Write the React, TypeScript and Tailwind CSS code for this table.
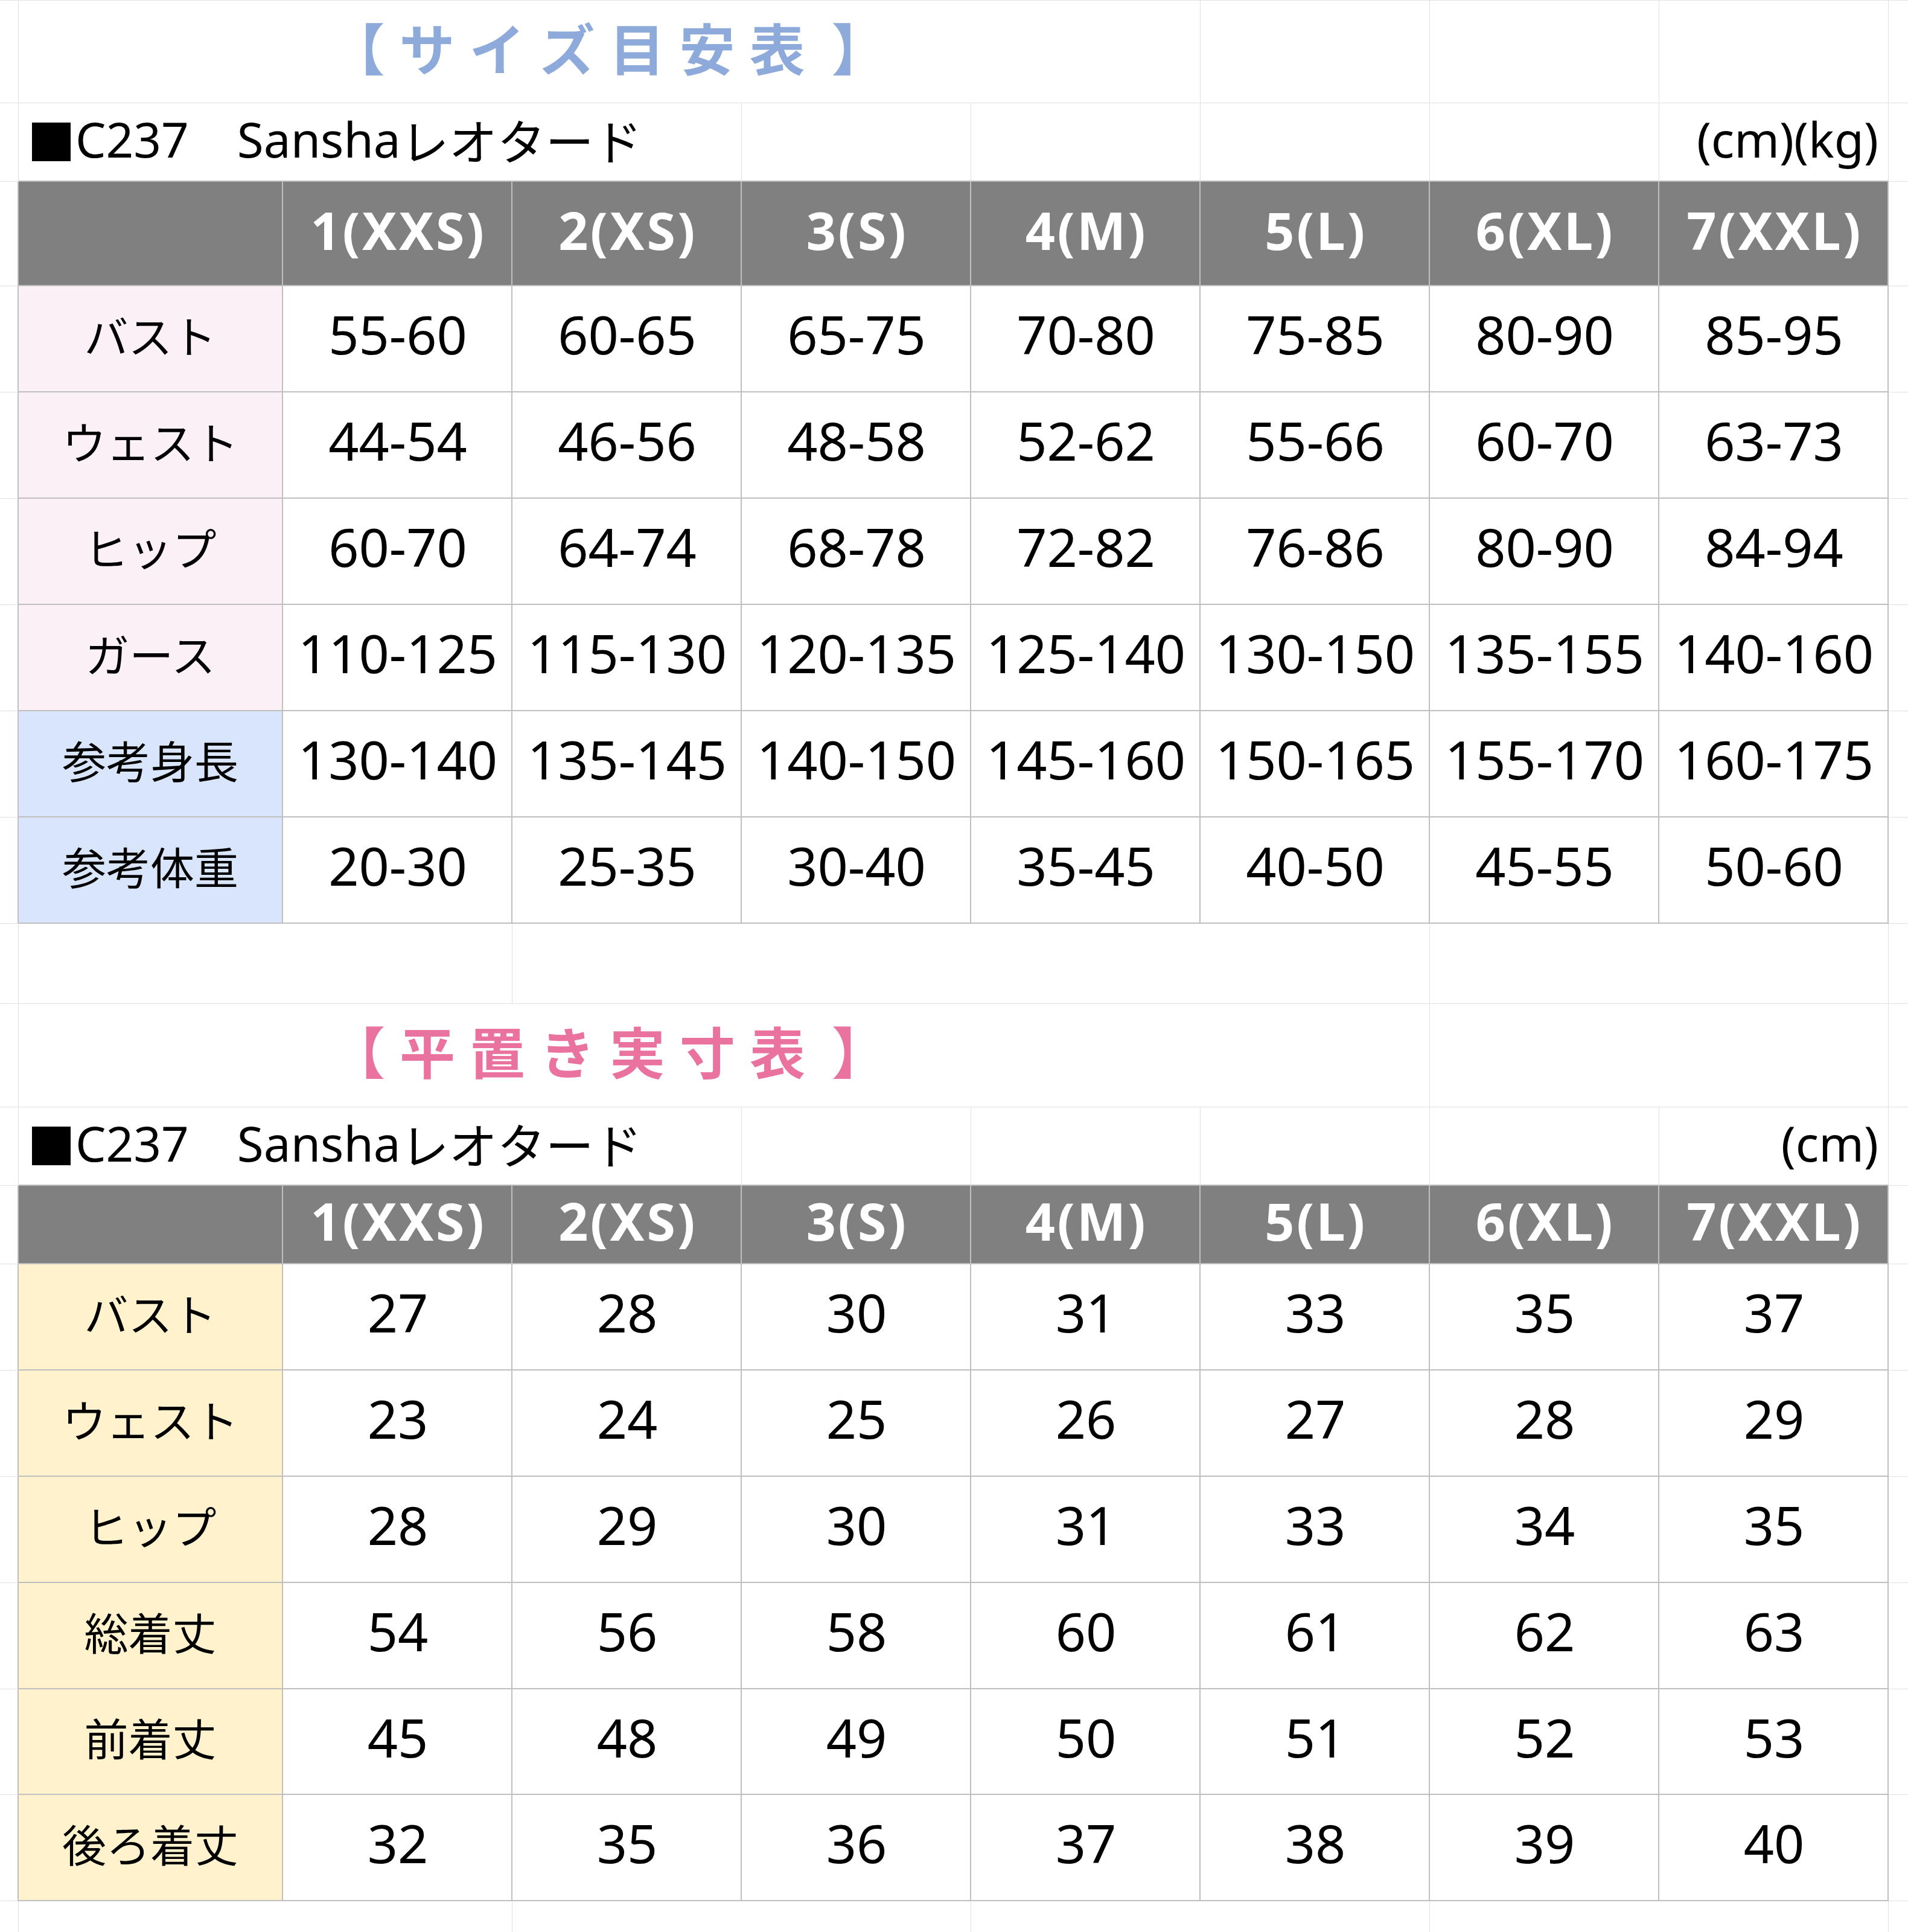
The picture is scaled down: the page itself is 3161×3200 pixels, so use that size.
import React from "react";

const sizes = ["1(XXS)", "2(XS)", "3(S)", "4(M)", "5(L)", "6(XL)", "7(XXL)"];

const table1: { label: string; bg: string; vals: string[] }[] = [
  { label: "バスト", bg: "bg-[#fbf0f6]", vals: ["55-60", "60-65", "65-75", "70-80", "75-85", "80-90", "85-95"] },
  { label: "ウェスト", bg: "bg-[#fbf0f6]", vals: ["44-54", "46-56", "48-58", "52-62", "55-66", "60-70", "63-73"] },
  { label: "ヒップ", bg: "bg-[#fbf0f6]", vals: ["60-70", "64-74", "68-78", "72-82", "76-86", "80-90", "84-94"] },
  { label: "ガース", bg: "bg-[#fbf0f6]", vals: ["110-125", "115-130", "120-135", "125-140", "130-150", "135-155", "140-160"] },
  { label: "参考身長", bg: "bg-[#d8e5fb]", vals: ["130-140", "135-145", "140-150", "145-160", "150-165", "155-170", "160-175"] },
  { label: "参考体重", bg: "bg-[#d8e5fb]", vals: ["20-30", "25-35", "30-40", "35-45", "40-50", "45-55", "50-60"] },
];

const table2: { label: string; vals: string[]; h: string }[] = [
  { label: "バスト", vals: ["27", "28", "30", "31", "33", "35", "37"], h: "h-[176px]" },
  { label: "ウェスト", vals: ["23", "24", "25", "26", "27", "28", "29"], h: "h-[176px]" },
  { label: "ヒップ", vals: ["28", "29", "30", "31", "33", "34", "35"], h: "h-[176px]" },
  { label: "総着丈", vals: ["54", "56", "58", "60", "61", "62", "63"], h: "h-[176px]" },
  { label: "前着丈", vals: ["45", "48", "49", "50", "51", "52", "53"], h: "h-[175px]" },
  { label: "後ろ着丈", vals: ["32", "35", "36", "37", "38", "39", "40"], h: "h-[176px]" },
];

const rowGrid = "grid grid-cols-[31px_438px_repeat(7,380px)_32px] w-[3161px]";
const cjk = "font-['Noto_Sans_CJK_JP',sans-serif]";
const latin = "font-['Noto_Sans','Noto_Sans_CJK_JP',sans-serif]";

function Title({ text, color }: { text: string; color: string }) {
  const chars = Array.from(text);
  return (
    <div className={`flex items-center justify-center gap-[24px] ${cjk} font-bold text-[92px] leading-none ${color} pb-[18px] pr-[4px]`}>
      {chars.map((c, i) => (
        <span key={i} className={i === chars.length - 1 ? "ml-[20px]" : ""}>
          {c}
        </span>
      ))}
    </div>
  );
}

function SubLine() {
  return (
    <div className={`${latin} text-[80px] leading-none text-black flex items-center pl-[14px] pb-[10px] h-full`}>
      <span className={cjk}>■</span>
      <span>C237</span>
      <span className={cjk}>　</span>
      <span>Sansha</span>
      <span className={cjk}>レオタード</span>
    </div>
  );
}

function HeaderRow({ h }: { h: string }) {
  return (
    <div className={`${rowGrid} ${h}`}>
      <div className="border-r-2 border-b border-r-[#bfbfbf] border-b-[#e1e1e1]" />
      <div className="bg-[#808080] border-r-2 border-b-2 border-[#bfbfbf]" />
      {sizes.map((s) => (
        <div
          key={s}
          className={`bg-[#808080] border-r-2 border-b-2 border-[#bfbfbf] flex items-center justify-center pb-[12px] pl-[4px] ${latin} font-bold text-[86px] tracking-[0.04em] leading-none text-white`}
        >
          {s}
        </div>
      ))}
      <div className="border-b border-[#e1e1e1]" />
    </div>
  );
}

function DataRow({ label, bg, vals, h }: { label: string; bg: string; vals: string[]; h: string }) {
  return (
    <div className={`${rowGrid} ${h}`}>
      <div className="border-r-2 border-b border-r-[#bfbfbf] border-b-[#e1e1e1]" />
      <div
        className={`${bg} border-r-2 border-b-2 border-[#bfbfbf] flex items-center justify-center pb-[16px] ${cjk} text-[73px] leading-none text-black`}
      >
        {label}
      </div>
      {vals.map((v, i) => (
        <div
          key={i}
          className={`bg-white border-r-2 border-b-2 border-[#bfbfbf] flex items-center justify-center pb-[16px] pl-[2px] ${latin} text-[88px] leading-none text-black`}
        >
          {v}
        </div>
      ))}
      <div className="border-b border-[#e1e1e1]" />
    </div>
  );
}

export default function App() {
  const g = "border-[#e1e1e1]";
  return (
    <div className="w-[3161px] h-[3200px] bg-white overflow-hidden flex flex-col">
      {/* Title 1 */}
      <div className={`${rowGrid} h-[171px] border-t ${g}`}>
        <div className={`border-r border-b ${g}`} />
        <div className={`col-span-5 border-r border-b ${g} flex items-center justify-center`}>
          <Title text="【サイズ目安表】" color="text-[#8eaadb]" />
        </div>
        <div className={`border-r border-b ${g}`} />
        <div className={`border-r border-b ${g}`} />
        <div className={`border-r border-b ${g}`} />
        <div className={`border-b ${g}`} />
      </div>
      {/* Sub 1 */}
      <div className={`${rowGrid} h-[130px]`}>
        <div className={`border-r border-b ${g}`} />
        <div className="col-span-3 border-r border-b-2 border-r-[#e1e1e1] border-b-[#bfbfbf]">
          <SubLine />
        </div>
        <div className="border-r border-b-2 border-r-[#e1e1e1] border-b-[#bfbfbf]" />
        <div className="border-r border-b-2 border-r-[#e1e1e1] border-b-[#bfbfbf]" />
        <div className="border-r border-b-2 border-r-[#e1e1e1] border-b-[#bfbfbf]" />
        <div className="border-r border-b-2 border-r-[#e1e1e1] border-b-[#bfbfbf]" />
        <div className={`border-r border-b-2 border-r-[#e1e1e1] border-b-[#bfbfbf] flex items-center justify-end pr-[16px] pb-[10px] ${latin} text-[80px] leading-none text-black`}>
          (cm)(kg)
        </div>
        <div className={`border-b ${g}`} />
      </div>
      <HeaderRow h="h-[173px]" />
      {table1.map((r) => (
        <DataRow key={r.label} label={r.label} bg={r.bg} vals={r.vals} h="h-[176px]" />
      ))}
      {/* Empty spacer row */}
      <div className={`${rowGrid} h-[133px]`}>
        <div className={`border-r border-b ${g}`} />
        <div className={`col-span-2 border-r border-b ${g}`} />
        <div className={`col-span-4 border-r border-b ${g}`} />
        <div className={`col-span-2 border-r border-b ${g}`} />
        <div className={`border-b ${g}`} />
      </div>
      {/* Title 2 */}
      <div className={`${rowGrid} h-[171px]`}>
        <div className={`border-r border-b ${g}`} />
        <div className={`col-span-5 border-b ${g} flex items-center justify-center`}>
          <Title text="【平置き実寸表】" color="text-[#e9729f]" />
        </div>
        <div className={`border-r border-b ${g}`} />
        <div className={`col-span-2 border-r border-b ${g}`} />
        <div className={`border-b ${g}`} />
      </div>
      {/* Sub 2 */}
      <div className={`${rowGrid} h-[130px]`}>
        <div className={`border-r border-b ${g}`} />
        <div className="col-span-3 border-r border-b-2 border-r-[#e1e1e1] border-b-[#bfbfbf]">
          <SubLine />
        </div>
        <div className="border-r border-b-2 border-r-[#e1e1e1] border-b-[#bfbfbf]" />
        <div className="border-r border-b-2 border-r-[#e1e1e1] border-b-[#bfbfbf]" />
        <div className="border-r border-b-2 border-r-[#e1e1e1] border-b-[#bfbfbf]" />
        <div className="border-r border-b-2 border-r-[#e1e1e1] border-b-[#bfbfbf]" />
        <div className={`border-r border-b-2 border-r-[#e1e1e1] border-b-[#bfbfbf] flex items-center justify-end pr-[16px] pb-[10px] ${latin} text-[80px] leading-none text-black`}>
          (cm)
        </div>
        <div className={`border-b ${g}`} />
      </div>
      <HeaderRow h="h-[130px]" />
      {table2.map((r) => (
        <DataRow key={r.label} label={r.label} bg="bg-[#fff2cc]" vals={r.vals} h={r.h} />
      ))}
      {/* Bottom partial row */}
      <div className={`${rowGrid} h-[51px]`}>
        <div className={`border-r ${g}`} />
        <div className={`col-span-2 border-r ${g}`} />
        <div className={`col-span-2 border-r ${g}`} />
        <div className={`col-span-2 border-r ${g}`} />
        <div className={`col-span-2 border-r ${g}`} />
        <div />
      </div>
    </div>
  );
}
